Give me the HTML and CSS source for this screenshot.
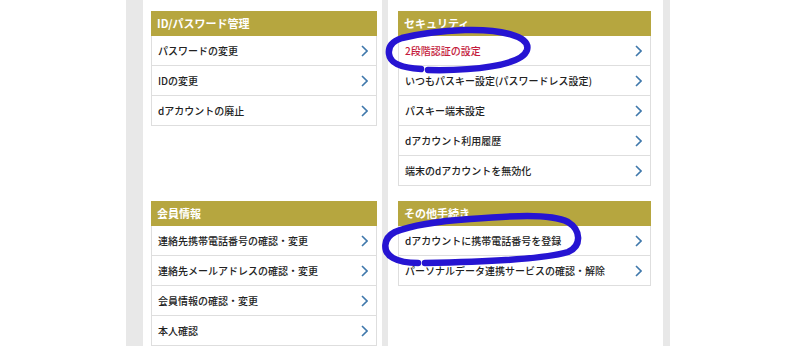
FILE: index.html
```html
<!DOCTYPE html>
<html lang="ja">
<head>
  <meta charset="UTF-8">
  <title>dアカウント設定</title>
  <link rel="stylesheet" href="styles.css">
</head>
<body>
  <div class="frame">
    <div class="cell col-a">
      <section class="menu">
        <h2 class="menu-title">ID/パスワード管理</h2>
        <ul class="menu-list">
          <li><a href="#">パスワードの変更<svg class="chev" viewBox="0 0 7 12"><polyline points="1,1 6,6 1,11"/></svg></a></li>
          <li><a href="#">IDの変更<svg class="chev" viewBox="0 0 7 12"><polyline points="1,1 6,6 1,11"/></svg></a></li>
          <li><a href="#">dアカウントの廃止<svg class="chev" viewBox="0 0 7 12"><polyline points="1,1 6,6 1,11"/></svg></a></li>
        </ul>
      </section>
    </div>
    <div class="cell col-b">
      <section class="menu">
        <h2 class="menu-title">セキュリティ</h2>
        <ul class="menu-list">
          <li><a href="#" class="alert">2段階認証の設定<svg class="chev" viewBox="0 0 7 12"><polyline points="1,1 6,6 1,11"/></svg></a></li>
          <li><a href="#">いつもパスキー設定(パスワードレス設定)<svg class="chev" viewBox="0 0 7 12"><polyline points="1,1 6,6 1,11"/></svg></a></li>
          <li><a href="#">パスキー端末設定<svg class="chev" viewBox="0 0 7 12"><polyline points="1,1 6,6 1,11"/></svg></a></li>
          <li><a href="#">dアカウント利用履歴<svg class="chev" viewBox="0 0 7 12"><polyline points="1,1 6,6 1,11"/></svg></a></li>
          <li><a href="#">端末のdアカウントを無効化<svg class="chev" viewBox="0 0 7 12"><polyline points="1,1 6,6 1,11"/></svg></a></li>
        </ul>
      </section>
    </div>
    <div class="cell col-a row-2">
      <section class="menu">
        <h2 class="menu-title">会員情報</h2>
        <ul class="menu-list">
          <li><a href="#">連絡先携帯電話番号の確認・変更<svg class="chev" viewBox="0 0 7 12"><polyline points="1,1 6,6 1,11"/></svg></a></li>
          <li><a href="#">連絡先メールアドレスの確認・変更<svg class="chev" viewBox="0 0 7 12"><polyline points="1,1 6,6 1,11"/></svg></a></li>
          <li><a href="#">会員情報の確認・変更<svg class="chev" viewBox="0 0 7 12"><polyline points="1,1 6,6 1,11"/></svg></a></li>
          <li><a href="#">本人確認<svg class="chev" viewBox="0 0 7 12"><polyline points="1,1 6,6 1,11"/></svg></a></li>
        </ul>
      </section>
    </div>
    <div class="cell col-b row-2">
      <section class="menu">
        <h2 class="menu-title">その他手続き</h2>
        <ul class="menu-list">
          <li><a href="#">dアカウントに携帯電話番号を登録<svg class="chev" viewBox="0 0 7 12"><polyline points="1,1 6,6 1,11"/></svg></a></li>
          <li><a href="#">パーソナルデータ連携サービスの確認・解除<svg class="chev" viewBox="0 0 7 12"><polyline points="1,1 6,6 1,11"/></svg></a></li>
        </ul>
      </section>
    </div>
  </div>

  <!-- hand-drawn marker circles on top of the screenshot -->
  <svg class="marker" viewBox="0 0 800 346">
    <path d="M428 70 C470 71 522 66 527 50 C531 36 500 29 465 30 C440 31 418 34 402 38 C392 41 388 47 389 54 C390 63 402 68 421 69"/>
    <path d="M425 263 C480 262 545 259 568 252 C582 246 581 230 568 222 C550 213 510 216 470 219 C440 221 410 226 395 232 C383 238 382 252 393 258 C400 262 410 263 418 263"/>
  </svg>
</body>
</html>
```

FILE: styles.css
```css
body {
  margin: 0;
  background: #fff;
  font-family: "Noto Sans CJK JP", "Noto Sans", sans-serif;
  color: #222;
  overflow: hidden;
}
.frame {
  display: grid;
  grid-template-columns: 239px 275px;
  grid-template-rows: auto 1fr;
  column-gap: 6px;
  width: 544px;
  height: 346px;
  margin-left: 126px;
  padding: 0 7px 0 17px;
  box-sizing: border-box;
  background: #e8e8e8;
  overflow: hidden;
}
.cell {
  background: #fff;
  min-height: 0;
}
.col-a {
  padding: 11px 5px 0 8px;
}
.col-b {
  padding: 11px 12px 0 10px;
}
.row-2 {
  padding-top: 15px;
}
.menu-title {
  margin: 0;
  height: 25px;
  line-height: 25px;
  padding-left: 6px;
  background: #b6a63f;
  color: #fff;
  font-size: 11px;
  font-weight: bold;
}
.menu-list {
  list-style: none;
  margin: 0;
  padding: 0;
  border-left: 1px solid #dedede;
  border-right: 1px solid #dedede;
}
.menu-list li {
  border-bottom: 1px solid #dedede;
}
.menu-list a {
  display: flex;
  align-items: center;
  justify-content: space-between;
  height: 29px;
  padding: 0 8px 0 6px;
  color: #222;
  text-decoration: none;
  font-size: 10px;
  font-weight: 500;
}
.menu-list a.alert {
  color: #c41a3c;
}
.chev {
  width: 7px;
  height: 12px;
  fill: none;
  stroke: #3f78ab;
  stroke-width: 1.6;
}
.marker {
  position: absolute;
  top: 0;
  left: 0;
  width: 800px;
  height: 346px;
  fill: none;
  stroke: #2614d2;
  stroke-width: 6.5;
  stroke-linecap: round;
  pointer-events: none;
}
```
